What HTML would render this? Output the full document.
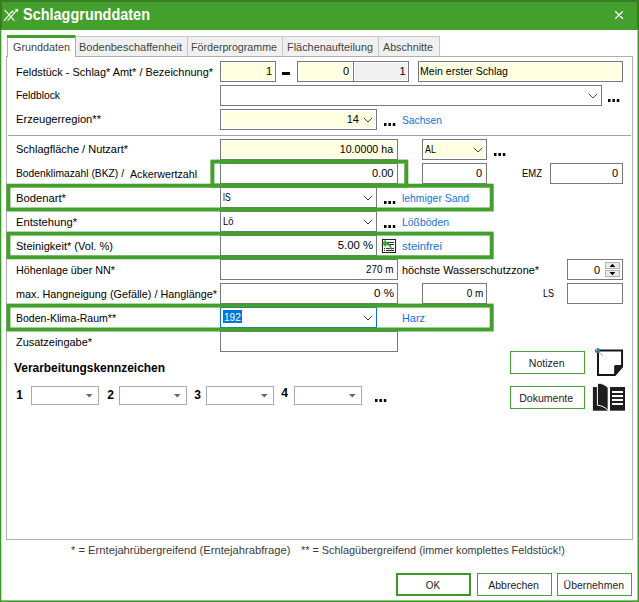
<!DOCTYPE html>
<html>
<head>
<meta charset="utf-8">
<title>Schlaggrunddaten</title>
<style>
html,body{margin:0;padding:0;background:#fff;}
#w{position:relative;width:639px;height:602px;overflow:hidden;background:#fff;font-family:"Liberation Sans", sans-serif;font-size:11px;}
#w div,#w span.t,#w svg{position:absolute;box-sizing:content-box;}
#w span.t{white-space:pre;font-family:"Liberation Sans", sans-serif;}
</style>
</head>
<body>
<div id="w">
<div style="left:0px;top:0px;width:639px;height:602px;background:#3a9c26;"></div>
<div style="left:0px;top:0px;width:639px;height:30px;background:#387d26;"></div>
<svg style="left:0;top:0" width="639" height="602"><rect x="1.3" y="29.6" width="636.2" height="570.8" fill="#fff"/></svg>
<div style="left:2px;top:2px;width:635px;height:28px;background:#43a02d;"></div>
<svg style="left:0;top:0" width="30" height="30" viewBox="0 0 30 30"><g stroke="#f4faf2" stroke-width="1.15" fill="none" stroke-linecap="round"><path d="M5 10.3 L14 20.4"/><path d="M4.4 20.4 L11.6 11.8"/><path d="M7.8 20.4 L16.2 10.8"/></g><path d="M14.6 9.4 L18.2 8.7 L17.8 12.4 Z" fill="#fff"/><path d="M10.5 11.9 L13.2 9.9 L13.3 13 Z" fill="#fff"/></svg>
<span class="t" style="top:5.26px;font-size:16px;line-height:19px;color:#fff;font-weight:bold;left:23px;transform-origin:0 0;transform:scaleX(0.9042);">Schlaggrunddaten</span>
<svg style="left:610px;top:6px" width="18" height="18" viewBox="610 6 18 18"><path d="M615.5 11.6 L622.6 18.4 M622.6 11.6 L615.5 18.4" stroke="#fff" stroke-width="1.35" stroke-linecap="round" fill="none"/></svg>
<div style="left:6px;top:56px;width:625px;height:482px;background:#fff;border:1px solid #b0b0b0;"></div>
<div style="left:75px;top:36px;width:111px;height:19px;background:#f0f0f0;border:1px solid #c8c8c8;"></div>
<div style="left:187px;top:36px;width:94px;height:19px;background:#f0f0f0;border:1px solid #c8c8c8;"></div>
<div style="left:282px;top:36px;width:95px;height:19px;background:#f0f0f0;border:1px solid #c8c8c8;"></div>
<div style="left:378px;top:36px;width:60px;height:19px;background:#f0f0f0;border:1px solid #c8c8c8;"></div>
<span class="t" style="top:40.19px;font-size:11px;line-height:14px;color:#444;left:79px;transform-origin:0 0;transform:scaleX(0.9983);">Bodenbeschaffenheit</span>
<span class="t" style="top:40.19px;font-size:11px;line-height:14px;color:#444;left:191px;transform-origin:0 0;transform:scaleX(0.9702);">Förderprogramme</span>
<span class="t" style="top:40.19px;font-size:11px;line-height:14px;color:#444;left:287px;transform-origin:0 0;transform:scaleX(0.9903);">Flächenaufteilung</span>
<span class="t" style="top:40.19px;font-size:11px;line-height:14px;color:#444;left:383px;transform-origin:0 0;transform:scaleX(0.9732);">Abschnitte</span>
<div style="left:7px;top:56px;width:625px;height:1px;background:#b0b0b0;"></div>
<div style="left:7px;top:35px;width:67px;height:20px;background:#fff;border:1px solid #b0b0b0;border-bottom:none;height:21px;"></div>
<div style="left:7px;top:35px;width:68px;height:3px;background:#43a02d;"></div>
<span class="t" style="top:39.79px;font-size:11px;line-height:14px;color:#444;left:12.6px;transform-origin:0 0;transform:scaleX(0.9809);">Grunddaten</span>
<span class="t" style="top:64.99px;font-size:11px;line-height:14px;color:#000;left:15.6px;transform-origin:0 0;transform:scaleX(0.9944);">Feldstück - Schlag* Amt* / Bezeichnung*</span>
<div style="left:220px;top:61px;width:54px;height:19px;background:#fff;border:1px solid #7a7a7a;"></div>
<div style="left:222px;top:63px;width:52px;height:17px;background:#ffffe1;"></div>
<span class="t" style="top:64.19px;font-size:11px;line-height:14px;color:#000;right:367.00px;">1</span>
<div style="left:282px;top:72px;width:8px;height:3px;background:#000;"></div>
<div style="left:297px;top:61px;width:55px;height:19px;background:#fff;border:1px solid #7a7a7a;"></div>
<div style="left:299px;top:63px;width:53px;height:17px;background:#ffffe1;"></div>
<span class="t" style="top:64.19px;font-size:11px;line-height:14px;color:#000;right:290.00px;">0</span>
<div style="left:353px;top:61px;width:54px;height:19px;background:#fff;border:1px solid #7a7a7a;"></div>
<div style="left:355px;top:63px;width:52px;height:17px;background:#f0f0f0;"></div>
<span class="t" style="top:64.19px;font-size:11px;line-height:14px;color:#000;right:233.50px;">1</span>
<div style="left:418px;top:61px;width:203px;height:19px;background:#fff;border:1px solid #7a7a7a;"></div>
<div style="left:420px;top:63px;width:201px;height:17px;background:#ffffe1;"></div>
<span class="t" style="top:64.19px;font-size:11px;line-height:14px;color:#000;left:420.2px;transform-origin:0 0;transform:scaleX(0.9595);">Mein erster Schlag</span>
<span class="t" style="top:88.19px;font-size:11px;line-height:14px;color:#000;left:15.6px;transform-origin:0 0;transform:scaleX(0.9346);">Feldblock</span>
<div style="left:220px;top:85px;width:380px;height:19px;background:#fff;border:1px solid #7a7a7a;"></div>
<svg style="left:588px;top:92.5px" width="10" height="6" viewBox="0 0 10 6"><path d="M0.8 0.8 L5 5 L9.2 0.8" stroke="#444" stroke-width="1.0" fill="none"/></svg>
<svg style="left:608.2px;top:98.5px" width="12" height="4" viewBox="0 0 12 4"><path d="M0 0h2.5v2.9h-2.5zM4.4 0h2.5v2.9h-2.5zM8.8 0h2.5v2.9h-2.5z" fill="#000"/></svg>
<span class="t" style="top:112.19px;font-size:11px;line-height:14px;color:#000;left:15.6px;transform-origin:0 0;transform:scaleX(1.0145);">Erzeugerregion**</span>
<div style="left:220px;top:109px;width:155px;height:19px;background:#fff;border:1px solid #7a7a7a;"></div>
<div style="left:223px;top:112px;width:151px;height:15px;background:#ffffe1;"></div>
<svg style="left:363px;top:116.5px" width="10" height="6" viewBox="0 0 10 6"><path d="M0.8 0.8 L5 5 L9.2 0.8" stroke="#444" stroke-width="1.0" fill="none"/></svg>
<span class="t" style="top:112.19px;font-size:11px;line-height:14px;color:#000;right:280.00px;">14</span>
<svg style="left:384.0px;top:123.0px" width="12" height="4" viewBox="0 0 12 4"><path d="M0 0h2.5v2.9h-2.5zM4.4 0h2.5v2.9h-2.5zM8.8 0h2.5v2.9h-2.5z" fill="#000"/></svg>
<span class="t" style="top:112.89px;font-size:11px;line-height:14px;color:#0f74dc;left:402.1px;transform-origin:0 0;transform:scaleX(0.9343);">Sachsen</span>
<div style="left:8px;top:135px;width:623px;height:1px;background:#a2a2a2;"></div>
<span class="t" style="top:142.19px;font-size:11px;line-height:14px;color:#000;left:15.6px;transform-origin:0 0;transform:scaleX(1.0010);">Schlagfläche / Nutzart*</span>
<div style="left:220px;top:139px;width:176px;height:19px;background:#fff;border:1px solid #7a7a7a;"></div>
<div style="left:222px;top:141px;width:174px;height:17px;background:#ffffe1;"></div>
<span class="t" style="top:142.19px;font-size:11px;line-height:14px;color:#000;right:245.70px;transform-origin:100% 0;transform:scaleX(0.9680);">10.0000 ha</span>
<div style="left:422px;top:139px;width:63px;height:19px;background:#fff;border:1px solid #7a7a7a;"></div>
<div style="left:425px;top:142px;width:59px;height:15px;background:#ffffe1;"></div>
<svg style="left:473px;top:146.5px" width="10" height="6" viewBox="0 0 10 6"><path d="M0.8 0.8 L5 5 L9.2 0.8" stroke="#444" stroke-width="1.0" fill="none"/></svg>
<span class="t" style="top:142.19px;font-size:11px;line-height:14px;color:#000;left:425.2px;transform-origin:0 0;transform:scaleX(0.8019);">AL</span>
<svg style="left:494.4px;top:153.0px" width="12" height="4" viewBox="0 0 12 4"><path d="M0 0h2.5v2.9h-2.5zM4.4 0h2.5v2.9h-2.5zM8.8 0h2.5v2.9h-2.5z" fill="#000"/></svg>
<span class="t" style="top:166.19px;font-size:11px;line-height:14px;color:#000;left:15.6px;transform-origin:0 0;transform:scaleX(0.9347);">Bodenklimazahl (BKZ) /</span>
<span class="t" style="top:167.19px;font-size:11px;line-height:14px;color:#000;left:130px;transform-origin:0 0;transform:scaleX(0.9699);">Ackerwertzahl</span>
<div style="left:220px;top:163px;width:176px;height:19px;background:#fff;border:1px solid #7a7a7a;"></div>
<span class="t" style="top:166.19px;font-size:11px;line-height:14px;color:#000;right:245.60px;transform-origin:100% 0;transform:scaleX(1.0036);">0.00</span>
<div style="left:422px;top:163px;width:63px;height:19px;background:#fff;border:1px solid #7a7a7a;"></div>
<span class="t" style="top:166.19px;font-size:11px;line-height:14px;color:#000;right:157.00px;">0</span>
<span class="t" style="top:166.19px;font-size:11px;line-height:14px;color:#000;left:521.8px;transform-origin:0 0;transform:scaleX(0.8608);">EMZ</span>
<div style="left:550px;top:163px;width:71px;height:19px;background:#fff;border:1px solid #7a7a7a;"></div>
<span class="t" style="top:166.19px;font-size:11px;line-height:14px;color:#000;right:21.00px;">0</span>
<span class="t" style="top:190.89px;font-size:11px;line-height:14px;color:#000;left:15.6px;transform-origin:0 0;transform:scaleX(1.0217);">Bodenart*</span>
<div style="left:220px;top:187px;width:155px;height:19px;background:#fff;border:1px solid #7a7a7a;"></div>
<svg style="left:363px;top:194.5px" width="10" height="6" viewBox="0 0 10 6"><path d="M0.8 0.8 L5 5 L9.2 0.8" stroke="#444" stroke-width="1.0" fill="none"/></svg>
<span class="t" style="top:190.19px;font-size:11px;line-height:14px;color:#000;left:222.6px;transform-origin:0 0;transform:scaleX(0.7770);">lS</span>
<svg style="left:384.0px;top:201.0px" width="12" height="4" viewBox="0 0 12 4"><path d="M0 0h2.5v2.9h-2.5zM4.4 0h2.5v2.9h-2.5zM8.8 0h2.5v2.9h-2.5z" fill="#000"/></svg>
<span class="t" style="top:191.19px;font-size:11px;line-height:14px;color:#0f74dc;left:402.1px;transform-origin:0 0;transform:scaleX(0.9445);">lehmiger Sand</span>
<span class="t" style="top:214.69px;font-size:11px;line-height:14px;color:#000;left:15.6px;transform-origin:0 0;transform:scaleX(1.0177);">Entstehung*</span>
<div style="left:220px;top:211px;width:155px;height:19px;background:#fff;border:1px solid #7a7a7a;"></div>
<svg style="left:363px;top:218.5px" width="10" height="6" viewBox="0 0 10 6"><path d="M0.8 0.8 L5 5 L9.2 0.8" stroke="#444" stroke-width="1.0" fill="none"/></svg>
<span class="t" style="top:214.19px;font-size:11px;line-height:14px;color:#000;left:222.6px;transform-origin:0 0;transform:scaleX(0.8490);">Lö</span>
<svg style="left:384.0px;top:225.0px" width="12" height="4" viewBox="0 0 12 4"><path d="M0 0h2.5v2.9h-2.5zM4.4 0h2.5v2.9h-2.5zM8.8 0h2.5v2.9h-2.5z" fill="#000"/></svg>
<span class="t" style="top:215.19px;font-size:11px;line-height:14px;color:#0f74dc;left:402.1px;transform-origin:0 0;transform:scaleX(0.9486);">Lößböden</span>
<span class="t" style="top:238.69px;font-size:11px;line-height:14px;color:#000;left:15.6px;transform-origin:0 0;transform:scaleX(1.0040);">Steinigkeit* (Vol. %)</span>
<div style="left:220px;top:235px;width:155px;height:19px;background:#fff;border:1px solid #7a7a7a;"></div>
<span class="t" style="top:238.19px;font-size:11px;line-height:14px;color:#000;right:266.00px;transform-origin:100% 0;transform:scaleX(1.0365);">5.00 %</span>
<svg style="left:380px;top:237px" width="18" height="18" viewBox="380 237 18 18"><rect x="382.45" y="239.45" width="13.1" height="13.1" fill="#fff" stroke="#1a1a1a" stroke-width="1"/><path d="M386 242.4H394M386 244.5H394M386 248.4H394M386 250.5H394" stroke="#111" stroke-width="0.9"/><circle cx="384.5" cy="248.4" r="0.55" fill="#111"/><circle cx="384.5" cy="250.5" r="0.55" fill="#111"/><path d="M382.1 243.5 L385.6 239.2 L385.8 241.9 C389.8 242.3 392.2 245.8 391.7 250.9 C390.6 247.4 388.9 245.4 385.9 245 L386 247.6 Z" fill="#3ca032"/></svg>
<span class="t" style="top:238.99px;font-size:11px;line-height:14px;color:#0f74dc;left:402.1px;transform-origin:0 0;transform:scaleX(1.0381);">steinfrei</span>
<span class="t" style="top:263.39px;font-size:11px;line-height:14px;color:#000;left:15.6px;transform-origin:0 0;transform:scaleX(0.9752);">Höhenlage über NN*</span>
<div style="left:220px;top:259px;width:176px;height:19px;background:#fff;border:1px solid #7a7a7a;"></div>
<span class="t" style="top:262.49px;font-size:11px;line-height:14px;color:#000;right:245.80px;transform-origin:100% 0;transform:scaleX(0.8993);">270 m</span>
<span class="t" style="top:263.39px;font-size:11px;line-height:14px;color:#000;left:402.1px;transform-origin:0 0;transform:scaleX(0.9900);">höchste Wasserschutzzone*</span>
<div style="left:567px;top:259px;width:54px;height:19px;background:#fff;border:1px solid #7a7a7a;"></div>
<span class="t" style="top:263.19px;font-size:11px;line-height:14px;color:#000;right:39.00px;">0</span>
<div style="left:605px;top:262px;width:13px;height:5px;background:#ebebeb;border:1px solid #b4b4b4;"></div>
<div style="left:605px;top:270px;width:13px;height:5px;background:#ebebeb;border:1px solid #b4b4b4;"></div>
<svg style="left:605px;top:260px" width="16" height="18" viewBox="605 260 16 18"><path d="M609.5 267 L612.4 263.7 L615.3 267 Z M609.5 272 L612.4 275.2 L615.3 272 Z" fill="#000"/></svg>
<span class="t" style="top:286.99px;font-size:11px;line-height:14px;color:#000;left:15.6px;transform-origin:0 0;transform:scaleX(0.9841);">max. Hangneigung (Gefälle) / Hanglänge*</span>
<div style="left:220px;top:283px;width:176px;height:19px;background:#fff;border:1px solid #7a7a7a;"></div>
<span class="t" style="top:286.49px;font-size:11px;line-height:14px;color:#000;right:245.20px;transform-origin:100% 0;transform:scaleX(1.0544);">0 %</span>
<div style="left:422px;top:283px;width:63px;height:19px;background:#fff;border:1px solid #7a7a7a;"></div>
<span class="t" style="top:286.19px;font-size:11px;line-height:14px;color:#000;right:156.00px;transform-origin:100% 0;transform:scaleX(0.9049);">0 m</span>
<span class="t" style="top:286.19px;font-size:11px;line-height:14px;color:#000;left:543px;transform-origin:0 0;transform:scaleX(0.8167);">LS</span>
<div style="left:567px;top:283px;width:54px;height:19px;background:#fff;border:1px solid #7a7a7a;"></div>
<span class="t" style="top:310.69px;font-size:11px;line-height:14px;color:#000;left:15.6px;transform-origin:0 0;transform:scaleX(0.9565);">Boden-Klima-Raum**</span>
<div style="left:220px;top:307px;width:155px;height:19px;background:#fff;border:1px solid #0078d7;"></div>
<svg style="left:363px;top:314.5px" width="10" height="6" viewBox="0 0 10 6"><path d="M0.8 0.8 L5 5 L9.2 0.8" stroke="#444" stroke-width="1.0" fill="none"/></svg>
<div style="left:223px;top:310px;width:19px;height:13px;background:#0078d7;"></div>
<span class="t" style="top:310.19px;font-size:11px;line-height:14px;color:#fff;left:224.2px;transform-origin:0 0;transform:scaleX(0.9151);">192</span>
<span class="t" style="top:310.79px;font-size:11px;line-height:14px;color:#0f74dc;left:402.1px;transform-origin:0 0;transform:scaleX(0.9899);">Harz</span>
<span class="t" style="top:334.69px;font-size:11px;line-height:14px;color:#000;left:15.6px;transform-origin:0 0;transform:scaleX(0.9941);">Zusatzeingabe*</span>
<div style="left:220px;top:331px;width:176px;height:19px;background:#fff;border:1px solid #7a7a7a;"></div>
<svg style="left:0;top:0" width="639" height="602"><rect x="212.4" y="161.6" width="193.9" height="24.0" fill="none" stroke="#43a02e" stroke-width="4"/></svg>
<svg style="left:0;top:0" width="639" height="602"><rect x="8.4" y="185.7" width="483.3" height="23.80000000000001" fill="none" stroke="#43a02e" stroke-width="4"/></svg>
<svg style="left:0;top:0" width="639" height="602"><rect x="8.4" y="233.6" width="483.3" height="23.700000000000017" fill="none" stroke="#43a02e" stroke-width="4"/></svg>
<svg style="left:0;top:0" width="639" height="602"><rect x="8.4" y="305.6" width="483.3" height="23.899999999999977" fill="none" stroke="#43a02e" stroke-width="4"/></svg>
<span class="t" style="top:360.54px;font-size:12px;line-height:15px;color:#000;font-weight:bold;left:13.6px;transform-origin:0 0;transform:scaleX(0.9930);">Verarbeitungskennzeichen</span>
<div style="left:31px;top:386px;width:66px;height:17px;background:#fff;border:1px solid #ababab;"></div>
<svg style="left:86px;top:394px" width="8" height="4" viewBox="0 0 8 4"><path d="M0 0 H6.6 L3.3 3.4 Z" fill="#666"/></svg>
<span class="t" style="top:387.64px;font-size:12px;line-height:15px;color:#000;font-weight:bold;left:16.2px;">1</span>
<div style="left:119px;top:386px;width:66px;height:17px;background:#fff;border:1px solid #ababab;"></div>
<svg style="left:174px;top:394px" width="8" height="4" viewBox="0 0 8 4"><path d="M0 0 H6.6 L3.3 3.4 Z" fill="#666"/></svg>
<span class="t" style="top:387.64px;font-size:12px;line-height:15px;color:#000;font-weight:bold;left:107.2px;">2</span>
<div style="left:206px;top:386px;width:66px;height:17px;background:#fff;border:1px solid #ababab;"></div>
<svg style="left:261px;top:394px" width="8" height="4" viewBox="0 0 8 4"><path d="M0 0 H6.6 L3.3 3.4 Z" fill="#666"/></svg>
<span class="t" style="top:387.64px;font-size:12px;line-height:15px;color:#000;font-weight:bold;left:194.2px;">3</span>
<div style="left:294px;top:386px;width:66px;height:17px;background:#fff;border:1px solid #ababab;"></div>
<svg style="left:349px;top:394px" width="8" height="4" viewBox="0 0 8 4"><path d="M0 0 H6.6 L3.3 3.4 Z" fill="#666"/></svg>
<span class="t" style="top:386.24px;font-size:12px;line-height:15px;color:#000;font-weight:bold;left:281.2px;">4</span>
<svg style="left:375.1px;top:399.2px" width="12" height="4" viewBox="0 0 12 4"><path d="M0 0h2.5v2.9h-2.5zM4.4 0h2.5v2.9h-2.5zM8.8 0h2.5v2.9h-2.5z" fill="#000"/></svg>
<div style="left:510px;top:351px;width:73px;height:21px;background:#fff;border:1px solid #4aa236;"></div>
<span class="t" style="top:355.79px;font-size:11px;line-height:14px;color:#222;left:527.85px;transform-origin:50% 0;transform:scaleX(0.9572);">Notizen</span>
<div style="left:510px;top:386px;width:73px;height:21px;background:#fff;border:1px solid #4aa236;"></div>
<span class="t" style="top:390.79px;font-size:11px;line-height:14px;color:#222;left:518.37px;transform-origin:50% 0;transform:scaleX(0.9597);">Dokumente</span>
<svg style="left:592px;top:345px" width="36" height="34" viewBox="592 345 36 34"><path d="M598 350.6 H622.05 V366.6 L614.9 374.95 H598 Z" fill="#fff" stroke="#161616" stroke-width="2"/><path d="M614.1 375.4 V366.4 Q614.1 364.9 615.6 364.9 H623 V367 Z" fill="#1c1c1c"/><path d="M599 352 L602.9 355.9" stroke="#8a8a8a" stroke-width="0.7"/><circle cx="597.5" cy="350.5" r="2.6" fill="#3f7c9c"/><circle cx="596.4" cy="349.4" r="0.8" fill="#d5e6ee"/></svg>
<svg style="left:590px;top:380px" width="38" height="34" viewBox="590 380 38 34"><rect x="592.9" y="387" width="15" height="23.7" fill="#1e1e1e"/><path d="M597.4 383.2 C601.6 383 605.5 384.6 608.2 387.8 V410.6 C605.3 407.3 601.5 405.4 597.4 405.2 Z" fill="#1e1e1e" stroke="#fff" stroke-width="1"/><rect x="608.4" y="382" width="1.7" height="30" fill="#fff"/><rect x="610" y="387" width="15" height="23.7" fill="#1e1e1e"/><g fill="#fff"><rect x="612" y="391" width="11" height="2"/><rect x="612" y="395" width="11" height="2.1"/><rect x="612" y="399" width="11" height="2"/><rect x="612" y="403" width="11" height="2"/></g></svg>
<span class="t" style="top:543.49px;font-size:11px;line-height:14px;color:#3a3a3a;left:71.2px;transform-origin:0 0;transform:scaleX(1.0183);">* = Erntejahrübergreifend (Erntejahrabfrage)</span>
<span class="t" style="top:543.49px;font-size:11px;line-height:14px;color:#3a3a3a;left:301.2px;transform-origin:0 0;transform:scaleX(0.9885);">** = Schlagübergreifend (immer komplettes Feldstück!)</span>
<div style="left:396px;top:573px;width:71px;height:19px;background:#fff;border:2px solid #3d9a2a;"></div>
<span class="t" style="top:577.79px;font-size:11px;line-height:14px;color:#222;left:424.55px;transform-origin:50% 0;transform:scaleX(0.8927);">OK</span>
<div style="left:477px;top:573px;width:73px;height:21px;background:#fff;border:1px solid #4aa236;"></div>
<span class="t" style="top:577.79px;font-size:11px;line-height:14px;color:#222;left:486.89px;transform-origin:50% 0;transform:scaleX(0.9527);">Abbrechen</span>
<div style="left:557px;top:573px;width:73px;height:21px;background:#fff;border:1px solid #4aa236;"></div>
<span class="t" style="top:577.79px;font-size:11px;line-height:14px;color:#222;left:561.70px;transform-origin:50% 0;transform:scaleX(0.9498);">Übernehmen</span>
</div>
</body>
</html>
